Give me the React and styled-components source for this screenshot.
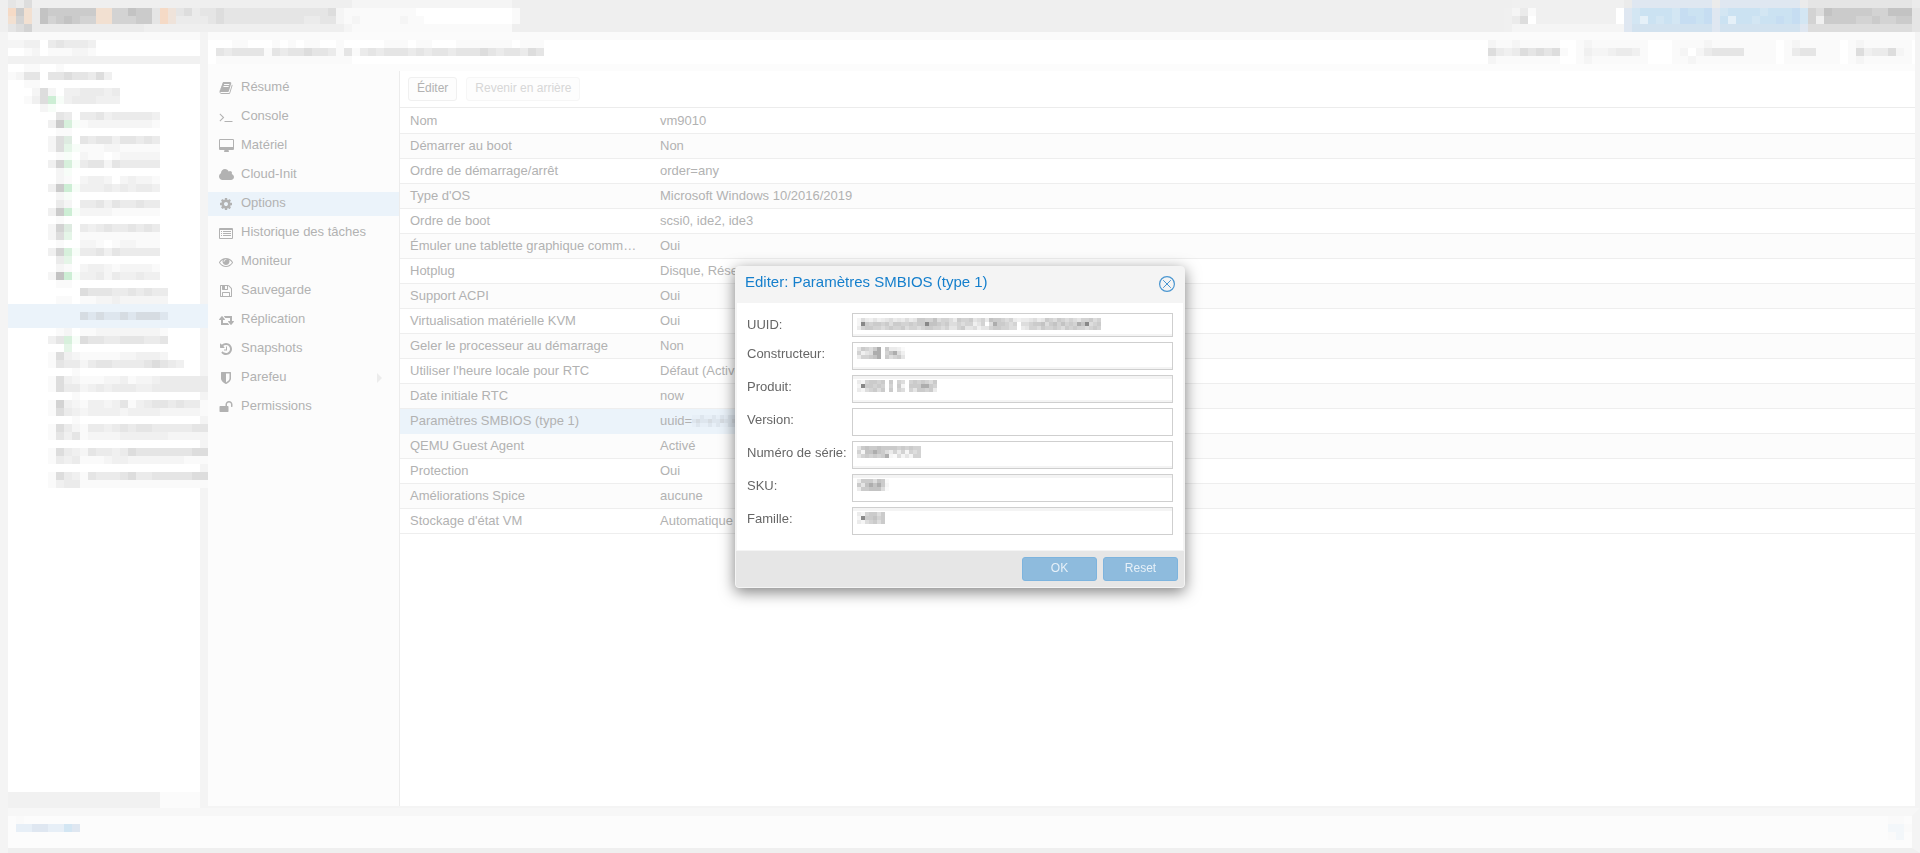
import styled, { createGlobalStyle } from "styled-components";

const GlobalStyle = createGlobalStyle`
  *, *::before, *::after {
    box-sizing: border-box;
  }

  body {
    margin: 0;
    background: #f4f4f4;
    color: #b2b2b2;
    font-family: "Liberation Sans", Arial, Helvetica, sans-serif;
    font-size: 13px;
  }
`;

// One character per censored block
const tones = {
  0: "#ffffff",
  1: "#fafafa",
  2: "#f5f5f5",
  3: "#f0f0f0",
  4: "#ebebeb",
  5: "#e5e5e5",
  6: "#dddddd",
  7: "#d3d3d3",
  8: "#cbcbcb",
  9: "#c3c3c3",
  A: "#adadad",
  B: "#888888",
  o: "#f2e0d1",
  p: "#f5dac6",
  q: "#efe3da",
  g: "#cdeed5",
  h: "#d7f0dc",
  i: "#e5f5e8",
  j: "#f7fdf8",
  k: "#deebe1",
  b: "#c6ddf2",
  c: "#cbe2f2",
  d: "#d3e6f3",
  e: "#dfe7f1",
  f: "#e7eff7",
  w: "#e5f0f8",
  x: "#f3f7fa",
  y: "#d2e2ef",
  m: "#d6dce2",
  n: "#dee6ee",
};

function Mosaic({ rows, size = 8, className }) {
  const columns = Math.max(...rows.map((row) => row.length));

  return (
    <svg
      className={className}
      width={columns * size}
      height={rows.length * size}
      shapeRendering="crispEdges"
      aria-hidden="true"
    >
      {rows.map((row, y) =>
        [...row].map((tone, x) =>
          tones[tone] ? (
            <rect
              key={`${x}-${y}`}
              x={x * size}
              y={y * size}
              width={size}
              height={size}
              fill={tones[tone]}
            />
          ) : null
        )
      )}
    </svg>
  );
}

const brandRows = [
  `546${".".repeat(40)}${"2".repeat(20)}`,
  "p8o49888888oo779885pq5645565555555555555621111111110000000000001",
  "o7o49789877oo777885pq4444565555555555445521211111211000000000001",
  `5674${"4".repeat(13)}${".".repeat(25)}2${"1".repeat(20)}`,
];

const accountRows = [
  ".333333333333334eeeeeeeeee4eeeeeeeeee455555555555554",
  "324133333333330edccccdbccbedccccdcccbd76988888779995",
  "346033333333330edwcdcdbbcbecwccdccbcbd73888877877885",
  "322222222222222eyyyyyyyyyyeyyyyyyyyyye66666666666665",
];

const titleRows = [
  "..11...1.1.11..1.....111.11...1111111.111",
  "54555515455655415145455545455455565455465",
  "11111111111111111........................",
];

const actionRows = [
  "21121111100121111111000111121111111101211111012111111",
  "64346565610132234431000120245555111101455111016344621",
  "21111111100121111111000112111111111101111111012111111",
];

const viewRows = ["2233.454443", "..12.111221"];

const treeItems = [
  ["..11..1", "1255.55655463", "..11"],
  ["...262.3344434", "..136gj3444333", "....2j"],
  ["......54.4453444443", ".....38hj1222222221", "......11"],
  [".....26k.5455355454", ".....26ij1112211111", "......1j.211.122222"],
  [".....37hj4552544444", "......2j", "......21.2332.23221"],
  [".....38gj3334343443", "......2j", "......42.4453544544"],
  [".....38gj2222111111", "......1", ".....27k.4345445454"],
  [".....26i.1111111111", "......1..221.122111", ".....37hj4453544444"],
  ["......4i", "......21.2332122221", ".....29gj3342433433"],
  ["......11", ".........65554454544", "......11.11223222222"],
  ["", ".........mnmnnmnmmmn", ""],
  ["......12.11222222221", ".....35hj65544555445", ".......i"],
  [".....163211111223332", ".....15442455444456543", "........1"],
  [".....16321112231223444444", ".....16442343444334444444", "........1"],
  [".....17321332351345545441", ".....16432333323333222221", "........1"],
  [".....16421443454554444455", ".....15351222233333322222", ""],
  [".....16432544346555555566", ".....14341112332222222111", ""],
  [".....16431544456445555566", ".....13441111111111111111", ""],
];

const menuIcons = {
  book: {
    viewBox: "0 0 1792 1792",
    path: "M1703 478q40 57 18 129l-275 906q-19 64-76.5 107.5t-122.5 43.5h-923q-77 0-148.5-53.5t-99.5-131.5q-24-67-2-127 0-4 3-27t4-37q1-8-3-21.5t-3-19.5q2-11 8-21t16.5-23.5 16.5-23.5q23-38 45-91.5t30-91.5q3-10 .5-30t-.5-28q3-11 17-28t17-23q21-36 42-92t25-90q1-9-2.5-32t.5-28q4-13 22-30.5t22-22.5q19-26 42.5-84.5t27.5-96.5q1-8-3-25.5t-2-26.5q2-8 9-18t18-23 17-21q8-12 16.5-30.5t15-35 16-36 19.5-32 26.5-23.5 36-11.5 47.5 5.5l-1 3q38-9 51-9h761q74 0 114 56t18 130l-274 906q-36 119-71.5 153.5t-128.5 34.5h-869q-27 0-38 15-11 16-1 43 24 70 144 70h923q29 0 56-15.5t35-41.5l300-987q7-22 5-57 38 15 59 43zm-1064 2q-4 13 2 22.5t20 9.5h608q13 0 25.5-9.5t16.5-22.5l21-64q4-13-2-22.5t-20-9.5h-608q-13 0-25.5 9.5t-16.5 22.5zm-83 256q-4 13 2 22.5t20 9.5h608q13 0 25.5-9.5t16.5-22.5l21-64q4-13-2-22.5t-20-9.5h-608q-13 0-25.5 9.5t-16.5 22.5z",
  },
  terminal: {
    viewBox: "0 0 1792 1792",
    path: "M649 983l-466 466q-10 10-23 10t-23-10l-50-50q-10-10-10-23t10-23l393-393-393-393q-10-10-10-23t10-23l50-50q10-10 23-10t23 10l466 466q10 10 10 23t-10 23zm1079 457v64q0 14-9 23t-23 9h-960q-14 0-23-9t-9-23v-64q0-14 9-23t23-9h960q14 0 23 9t9 23z",
  },
  desktop: {
    viewBox: "-64 0 1920 1792",
    path: "M1728 992v-832q0-13-9.5-22.5t-22.5-9.5h-1600q-13 0-22.5 9.5t-9.5 22.5v832q0 13 9.5 22.5t22.5 9.5h1600q13 0 22.5-9.5t9.5-22.5zm128-832v1088q0 66-47 113t-113 47h-544q0 37 16 77.5t32 71 16 43.5q0 26-19 45t-45 19h-512q-26 0-45-19t-19-45q0-14 16-44t32-70 16-78h-544q-66 0-113-47t-47-113v-1088q0-66 47-113t113-47h1600q66 0 113 47t47 113z",
  },
  cloud: {
    viewBox: "64 0 1920 1792",
    path: "M1984 1152q0 159-112.5 271.5t-271.5 112.5h-1088q-185 0-316.5-131.5t-131.5-316.5q0-132 71-241.5t187-163.5q-2-28-2-43 0-212 150-362t362-150q158 0 286.5 88t187.5 230q70-62 166-62 106 0 181 75t75 181q0 75-41 138 129 30 213 134.5t84 239.5z",
  },
  cog: {
    viewBox: "0 0 1792 1792",
    path: "M1152 896q0-106-75-181t-181-75-181 75-75 181 75 181 181 75 181-75 75-181zm512-109v222q0 12-8 23t-20 13l-185 28q-19 54-39 91 35 50 107 138 10 12 10 25t-9 23q-27 37-99 108t-94 71q-12 0-26-9l-138-108q-44 23-91 38-16 136-29 186-7 28-36 28h-222q-14 0-24.5-8.5t-11.5-21.5l-28-184q-49-16-90-37l-141 107q-10 9-25 9-14 0-25-11-126-114-165-168-7-10-7-23 0-12 8-23 15-21 51-66.5t54-70.5q-27-50-41-99l-183-27q-13-2-21-12.5t-8-23.5v-222q0-12 8-23t19-13l186-28q14-46 39-92-40-57-107-138-10-12-10-24 0-10 9-23 26-36 98.5-107.5t94.5-71.5q13 0 26 10l138 107q44-23 91-38 16-136 29-186 7-28 36-28h222q14 0 24.5 8.5t11.5 21.5l28 184q49 16 90 37l142-107q9-9 24-9 13 0 25 10 129 119 165 170 7 8 7 22 0 12-8 23-15 21-51 66.5t-54 70.5q26 50 41 98l183 28q13 2 21 12.5t8 23.5z",
  },
  list: {
    viewBox: "0 0 1792 1792",
    path: "M128 256h1536q128 0 128 128v1152q0 128-128 128h-1536q-128 0-128-128v-1152q0-128 128-128zm0 256v1024h1536v-1024zM256 640h128v128h-128zM512 640h1024v128h-1024zM256 896h128v128h-128zM512 896h1024v128h-1024zM256 1152h128v128h-128zM512 1152h1024v128h-1024z",
  },
  eye: {
    viewBox: "0 0 1792 1792",
    path: "M1664 960q-152-236-381-353 61 104 61 225 0 185-131.5 316.5t-316.5 131.5-316.5-131.5-131.5-316.5q0-121 61-225-229 117-381 353 133 205 333.5 326.5t434.5 121.5 434.5-121.5 333.5-326.5zm-720-384q0-20-14-34t-34-14q-125 0-214.5 89.5t-89.5 214.5q0 20 14 34t34 14 34-14 14-34q0-86 61-147t147-61q20 0 34-14t14-34zm848 384q0 34-20 69-140 230-376.5 368.5t-499.5 138.5-499.5-139-376.5-368q-20-35-20-69t20-69q140-229 376.5-368t499.5-139 499.5 139 376.5 368q20 35 20 69z",
  },
  floppy: {
    viewBox: "0 0 1792 1792",
    path: "M512 1536h768v-384h-768v384zm896 0h128v-896q0-14-10-38.5t-20-34.5l-281-281q-10-10-34-20t-39-10v416q0 40-28 68t-68 28h-576q-40 0-68-28t-28-68v-416h-128v1280h128v-416q0-40 28-68t68-28h832q40 0 68 28t28 68v416zm-384-928v-320q0-13-9.5-22.5t-22.5-9.5h-192q-13 0-22.5 9.5t-9.5 22.5v320q0 13 9.5 22.5t22.5 9.5h192q13 0 22.5-9.5t9.5-22.5zm640 32v928q0 40-28 68t-68 28h-1344q-40 0-68-28t-28-68v-1344q0-40 28-68t68-28h928q40 0 88 20t76 48l280 280q28 28 48 76t20 88z",
  },
  retweet: {
    viewBox: "0 0 1920 1792",
    path: "M1280 1504q0 13-9.5 22.5t-22.5 9.5h-960q-8 0-13.5-2t-9-7-5.5-8-3-11.5-1-11.5v-600h-192q-26 0-45-19t-19-45q0-24 15-41l320-384q19-22 49-22t49 22l320 384q15 17 15 41 0 26-19 45t-45 19h-192v384h576q16 0 25 11l160 192q7 10 7 21zm640-416q0 24-15 41l-320 384q-20 23-49 23t-49-23l-320-384q-15-17-15-41 0-26 19-45t45-19h192v-384h-576q-16 0-25-12l-160-192q-7-9-7-20 0-13 9.5-22.5t22.5-9.5h960q8 0 13.5 2t9 7 5.5 8 3 11.5 1 11.5v600h192q26 0 45 19t19 45z",
  },
  history: {
    viewBox: "0 0 1792 1792",
    path: "M1664 896q0 156-61 298t-164 245-245 164-298 61q-172 0-327-72.5t-264-204.5q-7-10-6.5-22.5t8.5-20.5l137-138q10-9 25-9 16 2 23 12 73 95 179 147t225 52q104 0 198.5-40.5t163.5-109.5 109.5-163.5 40.5-198.5-40.5-198.5-109.5-163.5-163.5-109.5-198.5-40.5q-98 0-188 35.5t-160 101.5l137 138q31 30 14 69-17 40-59 40h-448q-26 0-45-19t-19-45v-448q0-42 40-59 39-17 69 14l130 129q107-101 244.5-156.5t284.5-55.5q156 0 298 61t245 164 164 245 61 298zm-640-288v448q0 14-9 23t-23 9h-320q-14 0-23-9t-9-23v-64q0-14 9-23t23-9h224v-352q0-14 9-23t23-9h64q14 0 23 9t9 23z",
  },
  shield: {
    viewBox: "0 0 1792 1792",
    path: "M1344 960v-640h-448v1137q119-63 213-137 235-184 235-360zm192-768v768q0 86-33.5 170.5t-83 150-118 127.5-126.5 103-121 77.5-89.5 49.5-42.5 20q-12 6-26 6t-26-6q-16-7-42.5-20t-89.5-49.5-121-77.5-126.5-103-118-127.5-83-150-33.5-170.5v-768q0-26 19-45t45-19h1152q26 0 45 19t19 45z",
  },
  unlock: {
    viewBox: "0 0 1792 1792",
    path: "M1728 576v256q0 26-19 45t-45 19h-64q-26 0-45-19t-19-45v-256q0-106-75-181t-181-75-181 75-75 181v192h96q40 0 68 28t28 68v576q0 40-28 68t-68 28h-960q-40 0-68-28t-28-68v-576q0-40 28-68t68-28h672v-192q0-185 131.5-316.5t316.5-131.5 316.5 131.5 131.5 316.5z",
  },
};

const menuItems = [
  { label: "Résumé", icon: "book" },
  { label: "Console", icon: "terminal" },
  { label: "Matériel", icon: "desktop" },
  { label: "Cloud-Init", icon: "cloud" },
  { label: "Options", icon: "cog", active: true },
  { label: "Historique des tâches", icon: "list" },
  { label: "Moniteur", icon: "eye" },
  { label: "Sauvegarde", icon: "floppy" },
  { label: "Réplication", icon: "retweet" },
  { label: "Snapshots", icon: "history" },
  { label: "Parefeu", icon: "shield", expandable: true },
  { label: "Permissions", icon: "unlock" },
];

const options = [
  { name: "Nom", value: "vm9010" },
  { name: "Démarrer au boot", value: "Non" },
  { name: "Ordre de démarrage/arrêt", value: "order=any" },
  { name: "Type d'OS", value: "Microsoft Windows 10/2016/2019" },
  { name: "Ordre de boot", value: "scsi0, ide2, ide3" },
  { name: "Émuler une tablette graphique comme pointeur", value: "Oui" },
  { name: "Hotplug", value: "Disque, Réseau, USB" },
  { name: "Support ACPI", value: "Oui" },
  { name: "Virtualisation matérielle KVM", value: "Oui" },
  { name: "Geler le processeur au démarrage", value: "Non" },
  { name: "Utiliser l'heure locale pour RTC", value: "Défaut (Activé)" },
  { name: "Date initiale RTC", value: "now" },
  {
    name: "Paramètres SMBIOS (type 1)",
    value: "uuid=",
    hidden: ["ffnffnfnfnn", "nmnnmnnmnnm", "fnffnfnffnn"],
    selected: true,
  },
  { name: "QEMU Guest Agent", value: "Activé" },
  { name: "Protection", value: "Oui" },
  { name: "Améliorations Spice", value: "aucune" },
  { name: "Stockage d'état VM", value: "Automatique" },
];

const fields = [
  {
    id: "uuid",
    label: "UUID:",
    compact: true,
    bottomBand: true,
    hidden: [
      "2643534564546458877967764877856749887674344564587687676577867",
      "2B878878688778788B99878667677357.6A88767.66788968979787A9B678",
      "4788776787786776788776755785563557887766.45776877876878776787",
    ],
  },
  {
    id: "manufacturer",
    label: "Constructeur:",
    bottomBand: true,
    hidden: ["58768A.84431", "7356AA.79A63", "47789A.86785"],
  },
  {
    id: "product",
    label: "Produit:",
    topBand: true,
    bottomBand: true,
    hidden: [
      "4278878.8.76.7878768",
      "2B88787.7.82.888AA87",
      "4267868.8.76.7588784",
    ],
  },
  { id: "version", label: "Version:" },
  {
    id: "serial",
    label: "Numéro de série:",
    bottomBand: true,
    hidden: ["5898898888787877", "7299A98647472767", "5787878A21625277"],
  },
  {
    id: "sku",
    label: "SKU:",
    topBand: true,
    hidden: ["48886981", "859A9A82", "48899961"],
  },
  {
    id: "family",
    label: "Famille:",
    topBand: true,
    hidden: ["4278868", "2B88978", "4267868"],
  },
];

function MenuIcon({ name }) {
  const { viewBox, path } = menuIcons[name];
  const width = viewBox.includes("1920") ? 15 : 14;

  return (
    <svg
      width={width}
      height="14"
      viewBox={viewBox}
      fill="currentColor"
      fillRule={name === "list" ? "evenodd" : "nonzero"}
      aria-hidden="true"
    >
      <path d={path} />
    </svg>
  );
}

function SmbiosDialog() {
  return (
    <Overlay>
      <Dialog role="dialog" aria-labelledby="dialog-title">
        <DialogHeader>
          <DialogTitle id="dialog-title">
            Editer: Paramètres SMBIOS (type 1)
          </DialogTitle>
          <CloseButton type="button" aria-label="Fermer">
            <svg width="18" height="18" viewBox="0 0 18 18" fill="none">
              <circle cx="9" cy="9" r="7.4" stroke="#4a96d0" strokeWidth="1.2" />
              <path
                d="M5.2 5.2l7.6 7.6M12.8 5.2l-7.6 7.6"
                stroke="#4a96d0"
                strokeWidth="1"
              />
            </svg>
          </CloseButton>
        </DialogHeader>
        <DialogBody>
          {fields.map((field) => (
            <Field key={field.id}>
              <FieldLabel htmlFor={field.id}>{field.label}</FieldLabel>
              <InputWrap>
                <Input
                  id={field.id}
                  type="text"
                  $compact={field.compact}
                  $topBand={field.topBand}
                  $bottomBand={field.bottomBand}
                />
                {field.hidden && <FieldMosaic rows={field.hidden} size={4} />}
              </InputWrap>
            </Field>
          ))}
        </DialogBody>
        <DialogFooter>
          <PrimaryButton type="button">OK</PrimaryButton>
          <PrimaryButton type="button">Reset</PrimaryButton>
        </DialogFooter>
      </Dialog>
    </Overlay>
  );
}

export default function App() {
  return (
    <>
      <GlobalStyle />
      <Page>
        <Header>
          <Mosaic rows={brandRows} />
          <Mosaic rows={accountRows} />
        </Header>
        <Workspace>
          <TreePanel>
            <ViewSelector>
              <Mosaic rows={viewRows} />
            </ViewSelector>
            <Tree>
              {treeItems.map((rows, index) => (
                <TreeItem key={index} $selected={index === 10}>
                  <Mosaic rows={rows} />
                </TreeItem>
              ))}
            </Tree>
            <ScrollTrack>
              <ScrollThumb />
            </ScrollTrack>
          </TreePanel>
          <Content>
            <TitleBar>
              <Mosaic rows={titleRows} />
              <Mosaic rows={actionRows} />
            </TitleBar>
            <Panels>
              <Menu>
                {menuItems.map((item) => (
                  <MenuLink
                    key={item.label}
                    href={`#${item.icon}`}
                    $active={item.active}
                  >
                    <IconSlot>
                      <MenuIcon name={item.icon} />
                    </IconSlot>
                    <MenuLabel>{item.label}</MenuLabel>
                    {item.expandable && <Arrow />}
                  </MenuLink>
                ))}
              </Menu>
              <OptionsPanel>
                <Toolbar>
                  <ToolButton type="button">Éditer</ToolButton>
                  <ToolButton type="button" disabled>
                    Revenir en arrière
                  </ToolButton>
                </Toolbar>
                <OptionsTable>
                  <tbody>
                    {options.map((option) => (
                      <OptionRow key={option.name}>
                        <NameCell $selected={option.selected}>
                          {option.name}
                        </NameCell>
                        <ValueCell $selected={option.selected}>
                          <ValueContent>
                            {option.value}
                            {option.hidden && (
                              <Mosaic rows={option.hidden} size={4} />
                            )}
                          </ValueContent>
                        </ValueCell>
                      </OptionRow>
                    ))}
                  </tbody>
                </OptionsTable>
              </OptionsPanel>
            </Panels>
          </Content>
        </Workspace>
        <LogPanel>
          <Mosaic rows={["1", "ffeeffde"]} />
          <Mosaic rows={["11", "xx1", "1x"]} />
        </LogPanel>
      </Page>
      <SmbiosDialog />
    </>
  );
}

const Page = styled.div`
  display: flex;
  flex-direction: column;
  min-height: 100vh;
`;

const Header = styled.header`
  display: flex;
  justify-content: space-between;
  height: 32px;
  padding-left: 8px;
  background: #efefef;
`;

const Workspace = styled.div`
  display: flex;
  flex: 1;
  padding-right: 5px;
`;

const TreePanel = styled.aside`
  display: flex;
  flex-direction: column;
  width: 192px;
  margin: 0 8px;
  background: #ffffff;
  flex-shrink: 0;
`;

const ViewSelector = styled.div`
  height: 32px;
  border-top: 8px solid #fafafa;
  border-bottom: 8px solid #f1f1f1;
`;

const Tree = styled.ul`
  flex: 1;
  margin: 0;
  padding: 0;
  list-style: none;
`;

const TreeItem = styled.li`
  width: 200px;
  height: 24px;
  background: ${({ $selected }) => ($selected ? "#ebf3fa" : "none")};

  svg {
    display: block;
  }
`;

const ScrollTrack = styled.div`
  height: 16px;
  background: #fbfbfb;
`;

const ScrollThumb = styled.div`
  width: 152px;
  height: 16px;
  background: #f1f1f1;
`;

const Content = styled.main`
  display: flex;
  flex: 1;
  flex-direction: column;
  min-width: 0;
`;

const TitleBar = styled.div`
  display: flex;
  justify-content: space-between;
  height: 39px;
  padding: 0 3px 0 8px;
  border-top: 8px solid #fbfbfb;
  border-bottom: 7px solid #fcfcfc;
  background: #ffffff;
`;

const Panels = styled.div`
  display: flex;
  flex: 1;
  margin-bottom: 2px;
`;

const Menu = styled.nav`
  display: flex;
  flex-direction: column;
  gap: 5px;
  width: 192px;
  padding-top: 5px;
  border-right: 1px solid #ececec;
  background: #fcfcfc;
  flex-shrink: 0;
`;

const MenuLink = styled.a`
  display: flex;
  align-items: center;
  height: 24px;
  padding: 0 17px 0 10px;
  background: ${({ $active }) => ($active ? "#ebf3fa" : "none")};
  color: #b2b2b2;
  text-decoration: none;
`;

const IconSlot = styled.span`
  display: flex;
  justify-content: center;
  width: 16px;
`;

const MenuLabel = styled.span`
  flex: 1;
  height: 24px;
  margin-left: 7px;
  line-height: 22px;
`;

const Arrow = styled.span`
  border: 5px solid transparent;
  border-right: 0;
  border-left-color: #ececec;
`;

const OptionsPanel = styled.section`
  flex: 1;
  min-width: 0;
  background: #ffffff;
`;

const Toolbar = styled.div`
  display: flex;
  gap: 9px;
  height: 37px;
  padding: 6px 8px;
  border-bottom: 1px solid #ececec;
`;

const ToolButton = styled.button`
  height: 24px;
  padding: 0 8px 2px;
  border: 1px solid #f0f0f0;
  border-radius: 3px;
  background: #fdfdfd;
  color: #b2b2b2;
  font: 12px "Liberation Sans", Arial, sans-serif;

  &:disabled {
    border-color: #f6f6f6;
    color: #d7d7d7;
  }
`;

const OptionsTable = styled.table`
  width: 100%;
  margin-top: 1px;
  border-spacing: 0;
  table-layout: fixed;
`;

const OptionRow = styled.tr`
  background: #ffffff;

  &:nth-child(even) {
    background: #fcfcfc;
  }
`;

const Cell = styled.td`
  height: 25px;
  padding: 0 10px;
  border-bottom: 1px solid #eeeeee;
  line-height: 24px;
  white-space: nowrap;
`;

const NameCell = styled(Cell)`
  width: 250px;
  overflow: hidden;
  text-overflow: ellipsis;
  ${({ $selected }) =>
    $selected && "border-color: #ebf3fa; background: #ebf3fa;"}
`;

// The highlight stops partway through the value column
const ValueCell = styled(Cell)`
  ${({ $selected }) =>
    $selected &&
    `
      border-color: transparent;
      background:
        linear-gradient(90deg, #ebf3fa 300px, transparent 300px) border-box,
        linear-gradient(#ffffff, #ffffff) padding-box,
        #eeeeee;
    `}
`;

const ValueContent = styled.div`
  display: flex;
  align-items: center;
`;

const LogPanel = styled.footer`
  display: flex;
  justify-content: space-between;
  height: 45px;
  padding: 0 0 0 8px;
  margin-left: 8px;
  border-top: 8px solid #f7f7f7;
  border-right: 8px solid #f4f4f4;
  border-bottom: 5px solid #efefef;
  background: #fcfcfc;
`;

const Overlay = styled.div`
  position: fixed;
  inset: 0;
  display: flex;
  align-items: center;
  justify-content: center;
`;

const Dialog = styled.div`
  width: 450px;
  border: 1px solid #f4f4f4;
  border-radius: 4px;
  background: #f4f4f4;
  box-shadow: 0 4px 15px rgba(0, 0, 0, 0.5);
`;

const DialogHeader = styled.div`
  display: flex;
  justify-content: space-between;
  height: 36px;
  padding: 6px 8px 0 9px;
`;

const DialogTitle = styled.h1`
  margin: 0;
  color: #157fcc;
  font-size: 15px;
  font-weight: 400;
  line-height: 18px;
`;

const CloseButton = styled.button`
  display: flex;
  width: 18px;
  height: 18px;
  margin-top: 2px;
  padding: 0;
  border: 0;
  background: none;
`;

const DialogBody = styled.form`
  display: flex;
  flex-direction: column;
  gap: 5px;
  margin: 0 1px 1px;
  padding: 10px 10px 15px;
  background: #ffffff;
`;

const Field = styled.div`
  display: flex;
`;

const FieldLabel = styled.label`
  width: 105px;
  color: #666666;
  line-height: 24px;
  white-space: nowrap;
`;

const InputWrap = styled.div`
  position: relative;
  flex: 1;
`;

const Input = styled.input`
  display: block;
  width: 100%;
  height: ${({ $compact }) => ($compact ? "24px" : "28px")};
  padding: 0 6px;
  border: 1px solid #cfcfcf;
  background: #ffffff;
  box-shadow: inset 0 ${({ $topBand }) => ($topBand ? "3px" : "0")} #f4f4f4,
    inset 0 ${({ $bottomBand }) => ($bottomBand ? "-2px" : "0")} #f4f4f4;
  outline: 0;
`;

const FieldMosaic = styled(Mosaic)`
  position: absolute;
  top: 5px;
  left: 5px;
  pointer-events: none;
`;

const DialogFooter = styled.div`
  display: flex;
  gap: 6px;
  justify-content: flex-end;
  padding: 6px;
  border-radius: 0 0 3px 3px;
  background: #e6e6e6;
`;

const PrimaryButton = styled.button`
  width: 75px;
  height: 24px;
  padding: 0 0 2px;
  border: 1px solid #7db4de;
  border-radius: 3px;
  background: #8ebbdd;
  color: #e6f0f8;
  font: 12px "Liberation Sans", Arial, sans-serif;
`;
